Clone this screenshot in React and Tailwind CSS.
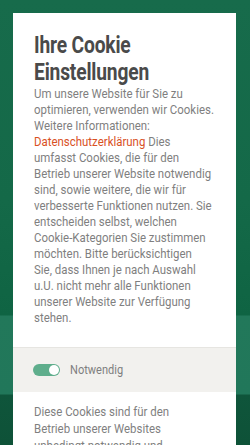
export default function App() {
  return (
    <div className="h-[445px] overflow-hidden bg-[linear-gradient(to_bottom,#176b4b_0px,#146948_200px,#0f6443_315px,#22785a_316px,#21775a_394px,#0f553b_395px,#0e5238_445px)] pt-[13px] pl-[13px] pr-[14px] font-['Roboto',sans-serif]">
      <div className="bg-white">
        {/* intro text */}
        <div className="pl-[21px] pr-[12px] pt-[19px] pb-[21px]">
          <h1 className="text-[24px] leading-[27px] font-bold text-[#4a4a4a] tracking-[-0.2px]">
            <span className="inline-block origin-left scale-x-[0.8] whitespace-nowrap">Ihre Cookie</span>
            <br />
            <span className="inline-block origin-left scale-x-[0.8] whitespace-nowrap">Einstellungen</span>
          </h1>
          <p className="origin-left scale-x-[0.88] text-[13px] leading-4 text-[#7f7f7f] whitespace-nowrap">
            Um unsere Website für Sie zu
            <br />
            optimieren, verwenden wir Cookies.
            <br />
            Weitere Informationen:
            <br />
            <a href="#" className="text-[#d9511f]">Datenschutzerklärung</a> Dies
            <br />
            umfasst Cookies, die für den
            <br />
            Betrieb unserer Website notwendig
            <br />
            sind, sowie weitere, die wir für
            <br />
            verbesserte Funktionen nutzen. Sie
            <br />
            entscheiden selbst, welchen
            <br />
            Cookie-Kategorien Sie zustimmen
            <br />
            möchten. Bitte berücksichtigen
            <br />
            Sie, dass Ihnen je nach Auswahl
            <br />
            u.U. nicht mehr alle Funktionen
            <br />
            unserer Website zur Verfügung
            <br />
            stehen.
          </p>
        </div>

        {/* category toggle */}
        <div className="h-[45px] border-t border-[#e6e5e1] bg-[#f2f1ee] pl-[20px] flex items-center gap-[10px]">
          <div className="w-[27px] h-[12px] rounded-full bg-[#5fae8c] flex items-center justify-end pr-[1px]">
            <div className="w-[10px] h-[10px] rounded-full bg-white" />
          </div>
          <span className="origin-left scale-x-[0.85] text-[13px] text-[#7f7f7f]">Notwendig</span>
        </div>

        {/* category description */}
        <div className="pl-[21px] pt-[11px]">
          <p className="origin-left scale-x-[0.88] text-[13px] leading-[17px] text-[#7f7f7f] whitespace-nowrap">
            Diese Cookies sind für den
            <br />
            Betrieb unserer Websites
            <br />
            unbedingt notwendig und
          </p>
        </div>
      </div>
    </div>
  );
}
